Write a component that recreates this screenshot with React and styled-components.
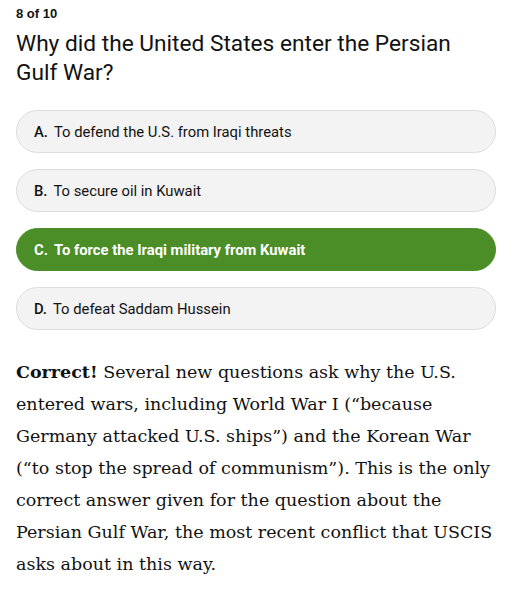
import React from 'react'
import styled, { createGlobalStyle } from 'styled-components'

const GlobalStyle = createGlobalStyle`
  body {
    margin: 0;
    background: #fff;
    color: #121212;
  }
`
const Wrapper = styled.div`
  padding: 6px 18px 0 16px;
`
const Counter = styled.div`
  font-family: 'Liberation Sans', Arial, sans-serif;
  font-size: 13px;
  font-weight: 700;
  line-height: 16px;
`
const Question = styled.h2`
  margin: 7px 0 23px;
  font-family: Roboto, 'Liberation Sans', sans-serif;
  font-size: 22.7px;
  font-weight: 400;
  line-height: 29px;
`
const Options = styled.div`
  display: flex;
  flex-direction: column;
  gap: 16px;
`
const Option = styled.div`
  display: flex;
  align-items: center;
  height: 43px;
  box-sizing: border-box;
  padding: 0 17px;
  border-radius: 22px;
  border: 1px solid ${(props) => (props.correct ? '#4b8d26' : '#dcdcdc')};
  background: ${(props) => (props.correct ? '#4b8d26' : '#f3f3f3')};
  color: ${(props) => (props.correct ? '#fff' : '#121212')};
  font-family: Roboto, 'Liberation Sans', sans-serif;
  font-size: 14.8px;
  font-weight: ${(props) => (props.correct ? 700 : 400)};
`
const Letter = styled.span`
  margin-right: 6px;
  font-weight: ${(props) => (props.correct ? 700 : 500)};
`
const Explanation = styled.p`
  margin: 26px 0 0;
  font-family: 'DejaVu Serif', Georgia, serif;
  font-size: 17.5px;
  line-height: 32px;
`
const answers = [
  { letter: 'A.', text: 'To defend the U.S. from Iraqi threats' },
  { letter: 'B.', text: 'To secure oil in Kuwait' },
  { letter: 'C.', text: 'To force the Iraqi military from Kuwait', correct: true },
  { letter: 'D.', text: 'To defeat Saddam Hussein' },
]

export default function App() {
  return (
    <Wrapper>
      <GlobalStyle />
      <Counter>8 of 10</Counter>
      <Question>Why did the United States enter the Persian Gulf War?</Question>
      <Options>
        {answers.map((a) => (
          <Option key={a.letter} correct={a.correct}>
            <Letter correct={a.correct}>{a.letter}</Letter>
            {a.text}
          </Option>
        ))}
      </Options>
      <Explanation>
        <b>Correct!</b> Several new questions ask why the U.S. entered wars,
        including World War I (“because Germany attacked U.S. ships”) and the
        Korean War (“to stop the spread of communism”). This is the only
        correct answer given for the question about the Persian Gulf War, the
        most recent conflict that USCIS asks about in this way.
      </Explanation>
    </Wrapper>
  )
}
